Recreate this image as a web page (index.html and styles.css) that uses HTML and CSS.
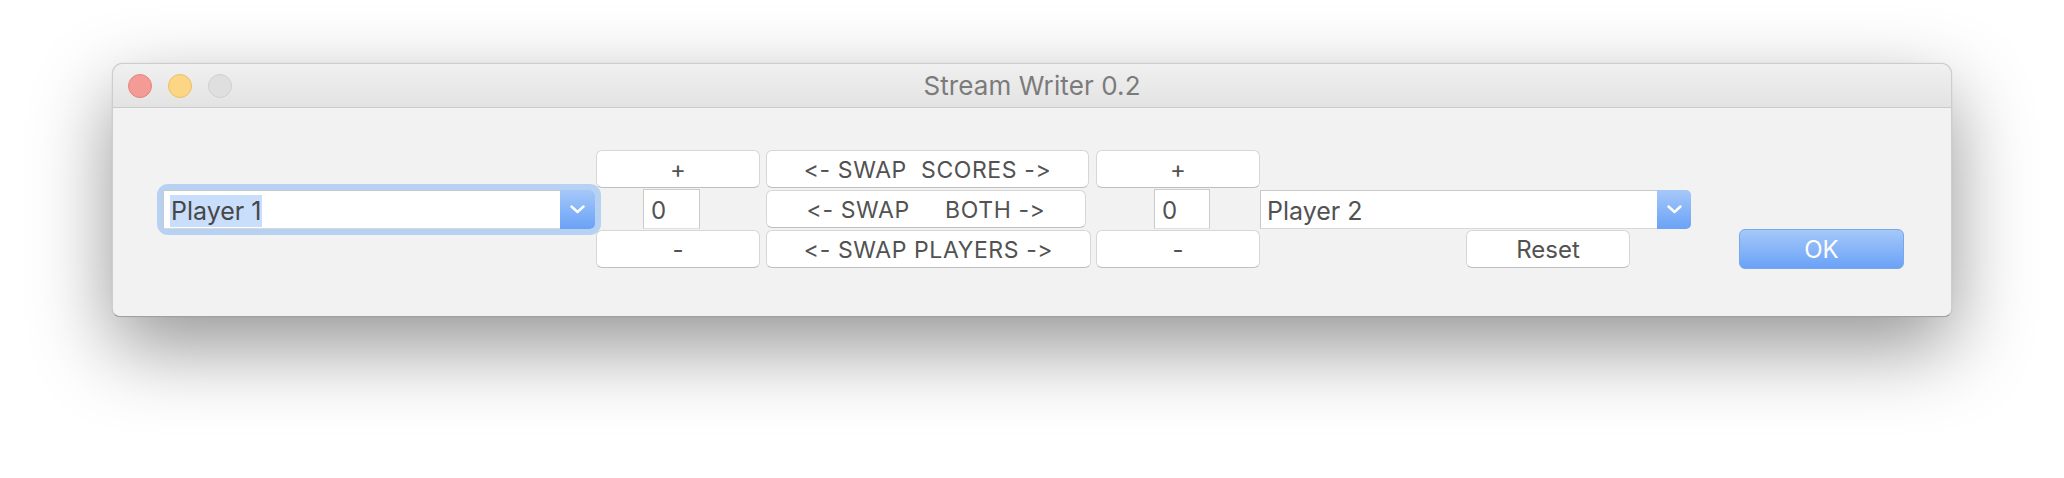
FILE: index.html
```html
<!DOCTYPE html>
<html>
<head>
<meta charset="utf-8">
<title>Stream Writer 0.2</title>
<link rel="stylesheet" href="styles.css">
</head>
<body>
<div class="desktop">
  <div class="window">
    <div class="titlebar">
      <div class="lights">
        <span class="light red"></span>
        <span class="light yellow"></span>
        <span class="light gray"></span>
      </div>
      <div class="title">Stream Writer 0.2</div>
    </div>
    <div class="content">
      <div class="grid">
        <div class="combo combo-left focused">
          <div class="combo-field"><span class="sel">Player 1</span></div>
          <div class="combo-btn"><svg width="15" height="9" viewBox="0 0 15 9"><polyline points="1.5,1.5 7.5,7 13.5,1.5" fill="none" stroke="#fff" stroke-width="2.4" stroke-linecap="round" stroke-linejoin="round"/></svg></div>
        </div>
        <button class="btn plus-l">+</button>
        <div class="score score-l">0</div>
        <button class="btn minus-l">-</button>

        <button class="btn swap swap-scores">&lt;- SWAP  SCORES -&gt;</button>
        <button class="btn swap swap-both">&lt;- SWAP     BOTH -&gt;</button>
        <button class="btn swap swap-players">&lt;- SWAP PLAYERS -&gt;</button>

        <button class="btn plus-r">+</button>
        <div class="score score-r">0</div>
        <button class="btn minus-r">-</button>

        <div class="combo combo-right">
          <div class="combo-field"><span>Player 2</span></div>
          <div class="combo-btn"><svg width="15" height="9" viewBox="0 0 15 9"><polyline points="1.5,1.5 7.5,7 13.5,1.5" fill="none" stroke="#fff" stroke-width="2.4" stroke-linecap="round" stroke-linejoin="round"/></svg></div>
        </div>
        <button class="btn reset">Reset</button>
        <button class="btn ok">OK</button>
      </div>
    </div>
  </div>
</div>
</body>
</html>
```
FILE: styles.css
```css
html, body {
  margin: 0;
  padding: 0;
  background: #ffffff;
}
body {
  width: 2064px;
  height: 478px;
  overflow: hidden;
  font-family: "Inter", "Liberation Sans", sans-serif;
  font-feature-settings: "calt" 0, "liga" 0;
}
.desktop {
  padding: 63px 0 0 112px;
}
.window {
  width: 1840px;
  height: 254px;
  box-sizing: border-box;
  background: #f2f2f2;
  border: 1px solid #cdcdcd;
  border-bottom-color: #a0a0a0;
  border-radius: 11px 11px 8px 8px;
  box-shadow: 0 30px 80px rgba(0, 0, 0, 0.42), 0 0 1px rgba(0, 0, 0, 0.2);
  overflow: hidden;
}
.titlebar {
  position: relative;
  height: 43px;
  border-bottom: 1px solid #cbcbcb;
  background: linear-gradient(#f0f0f0, #e3e3e3);
  display: flex;
  align-items: center;
  justify-content: center;
}
.lights {
  position: absolute;
  left: 15px;
  top: 10px;
  display: flex;
  gap: 16px;
}
.light {
  width: 24px;
  height: 24px;
  box-sizing: border-box;
  border-radius: 50%;
}
.light.red { background: #f39b94; border: 1px solid #e3857e; }
.light.yellow { background: #fcd685; border: 1px solid #e9bf66; }
.light.gray { background: #dfdfdf; border: 1px solid #cfcfcf; }
.title {
  font-size: 26px;
  color: #7b7b7b;
  letter-spacing: 0.1px;
}
.content {
  padding: 42px 0 0 50px;
}
.grid {
  display: grid;
  grid-template-columns: 433px 170px 330px 164px 479px 165px;
  grid-template-rows: 40px 40px 40px;
  align-items: start;
  justify-items: start;
}
.btn {
  margin: 0;
  padding: 0;
  height: 38px;
  box-sizing: border-box;
  background: #ffffff;
  border: 1px solid #d6d6d6;
  border-bottom-color: #bfbfbf;
  border-radius: 6px;
  font-family: "Inter", "Liberation Sans", sans-serif;
  font-feature-settings: "calt" 0, "liga" 0;
  font-size: 24px;
  color: #525252;
  white-space: pre;
  display: flex;
  align-items: center;
  justify-content: center;
}
.swap {
  font-size: 23px;
  letter-spacing: 0.6px;
  padding-top: 1px;
}
.plus-l { grid-column: 2; grid-row: 1; width: 164px; }
.minus-l { grid-column: 2; grid-row: 3; width: 164px; }
.plus-r { grid-column: 4; grid-row: 1; width: 164px; }
.minus-r { grid-column: 4; grid-row: 3; width: 164px; }
.swap-scores { grid-column: 3; grid-row: 1; width: 323px; }
.swap-both { grid-column: 3; grid-row: 2; width: 320px; }
.swap-players { grid-column: 3; grid-row: 3; width: 325px; }
.reset { grid-column: 5; grid-row: 3; width: 164px; margin-left: 206px; }
.ok {
  grid-column: 6;
  grid-row: 3;
  width: 165px;
  height: 40px;
  margin-top: -1px;
  color: #ffffff;
  border: 1px solid #78a7ee;
  background: linear-gradient(#a5c8f9, #6aa2f7);
}
.score {
  height: 40px;
  margin-top: -1px;
  box-sizing: border-box;
  background: #ffffff;
  border: 1px solid #cbcbcb;
  border-bottom-color: #e0e0e0;
  font-size: 24px;
  color: #525252;
  padding: 3px 0 0 7px;
  display: flex;
  align-items: center;
}
.score-l { grid-column: 2; grid-row: 2; width: 57px; margin-left: 47px; }
.score-r { grid-column: 4; grid-row: 2; width: 56px; margin-left: 58px; }
.combo {
  grid-row: 2;
  height: 39px;
  display: flex;
  position: relative;
  z-index: 1;
}
.combo-left { grid-column: 1; width: 432px; }
.combo-right { grid-column: 5; width: 431px; }
.combo.focused {
  border-radius: 5px;
  box-shadow: 0 0 0 6px #b7d1f3;
}
.combo-field {
  flex: 1;
  box-sizing: border-box;
  background: #ffffff;
  border: 1px solid #c9c9c9;
  border-right: none;
  border-bottom-color: #d8d8d8;
  font-size: 25px;
  color: #474747;
  padding: 3px 0 0 6px;
  display: flex;
  align-items: center;
}
.combo-right .combo-field { color: #525252; }
.sel {
  background: #c9defb;
  line-height: 32px;
  padding: 0 1px 0 1px;
}
.combo-btn {
  width: 35px;
  box-sizing: border-box;
  border-radius: 0 5px 5px 0;
  background: linear-gradient(#a5c8f9, #6aa2f7);
  display: flex;
  align-items: center;
  justify-content: center;
}
.combo-right .combo-btn { width: 34px; }
```
